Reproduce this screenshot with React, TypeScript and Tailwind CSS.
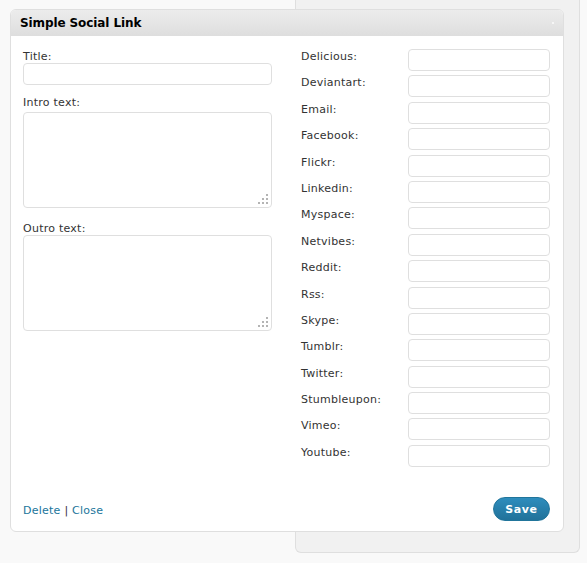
import React from 'react';

const socials = [
  'Delicious',
  'Deviantart',
  'Email',
  'Facebook',
  'Flickr',
  'Linkedin',
  'Myspace',
  'Netvibes',
  'Reddit',
  'Rss',
  'Skype',
  'Tumblr',
  'Twitter',
  'Stumbleupon',
  'Vimeo',
  'Youtube',
];

function Grip() {
  // the little dotted resize corner of the old WP textareas
  return (
    <div className="pointer-events-none absolute right-[4px] bottom-[4px] grid grid-cols-3 gap-[2px]">
      <span className="w-[2px] h-[2px]" />
      <span className="w-[2px] h-[2px]" />
      <span className="w-[2px] h-[2px] bg-[#b4b4b4]" />
      <span className="w-[2px] h-[2px]" />
      <span className="w-[2px] h-[2px] bg-[#b4b4b4]" />
      <span className="w-[2px] h-[2px] bg-[#b4b4b4]" />
      <span className="w-[2px] h-[2px] bg-[#b4b4b4]" />
      <span className="w-[2px] h-[2px] bg-[#b4b4b4]" />
      <span className="w-[2px] h-[2px] bg-[#b4b4b4]" />
    </div>
  );
}

function Area() {
  return (
    <div className="relative">
      <textarea className="block w-[249px] h-[96px] resize-none rounded-[4px] border border-[#dfdfdf] bg-white outline-none" />
      <Grip />
    </div>
  );
}

export default function App() {
  return (
    <div className="relative w-[587px] h-[563px] overflow-hidden bg-[#f9f9f9] font-['DejaVu_Sans',Verdana,sans-serif] text-[11px] tracking-[0.25px] text-[#333]">
      {/* sidebar holder sitting behind the open widget */}
      <div className="absolute top-0 left-[295px] w-[285px] h-[553px] bg-[#f1f1f1] border border-t-0 border-[#dfdfdf] rounded-b-[6px]" />

      <div className="relative pt-[9px] pl-[10px]">
        <div className="w-[554px] h-[523px] flex flex-col rounded-[6px] border border-[#dfdfdf] bg-white overflow-hidden">
          <div className="relative h-[26px] flex items-center pl-[9px] bg-gradient-to-b from-[#ececec] to-[#dedede]">
            <h3 className="text-[12px] font-bold text-black leading-none tracking-[-0.1px]">Simple Social Link</h3>
            <span className="absolute right-[9px] top-[12px] w-[2px] h-[2px] bg-[#f6f6f6]" />
          </div>

          <div className="flex-1 flex pl-[12px]">
            <div className="w-[249px] pt-[14px]">
              <label className="block leading-[13px]">Title:</label>
              <input className="block w-[249px] h-[22px] rounded-[4px] border border-[#dfdfdf] bg-white outline-none" />

              <label className="block leading-[13px] mt-[11px] mb-[3px]">Intro text:</label>
              <Area />

              <label className="block leading-[13px] mt-[14px]">Outro text:</label>
              <Area />
            </div>

            <div className="ml-[29px] pt-[13px] flex flex-col gap-[4.4px]">
              {socials.map((s) => (
                <div key={s} className="flex items-start h-[22px]">
                  <label className="w-[107px] pt-[1px] leading-[13px]">{s}:</label>
                  <input className="w-[142px] h-[22px] rounded-[4px] border border-[#dfdfdf] bg-white outline-none" />
                </div>
              ))}
            </div>
          </div>

          <div className="flex items-end justify-between pl-[12px] pr-[13px] pb-[10px]">
            <div className="leading-[13px] mb-[4px]">
              <a href="#" className="text-[#21759b]">Delete</a>
              <span className="text-[#333]"> | </span>
              <a href="#" className="text-[#21759b]">Close</a>
            </div>
            <button className="w-[57px] h-[24px] rounded-full border border-[#21759b] bg-gradient-to-b from-[#2e8dbd] to-[#21729a] text-white font-bold text-[11px] tracking-[0.6px] leading-none">
              Save
            </button>
          </div>
        </div>
      </div>
    </div>
  );
}
